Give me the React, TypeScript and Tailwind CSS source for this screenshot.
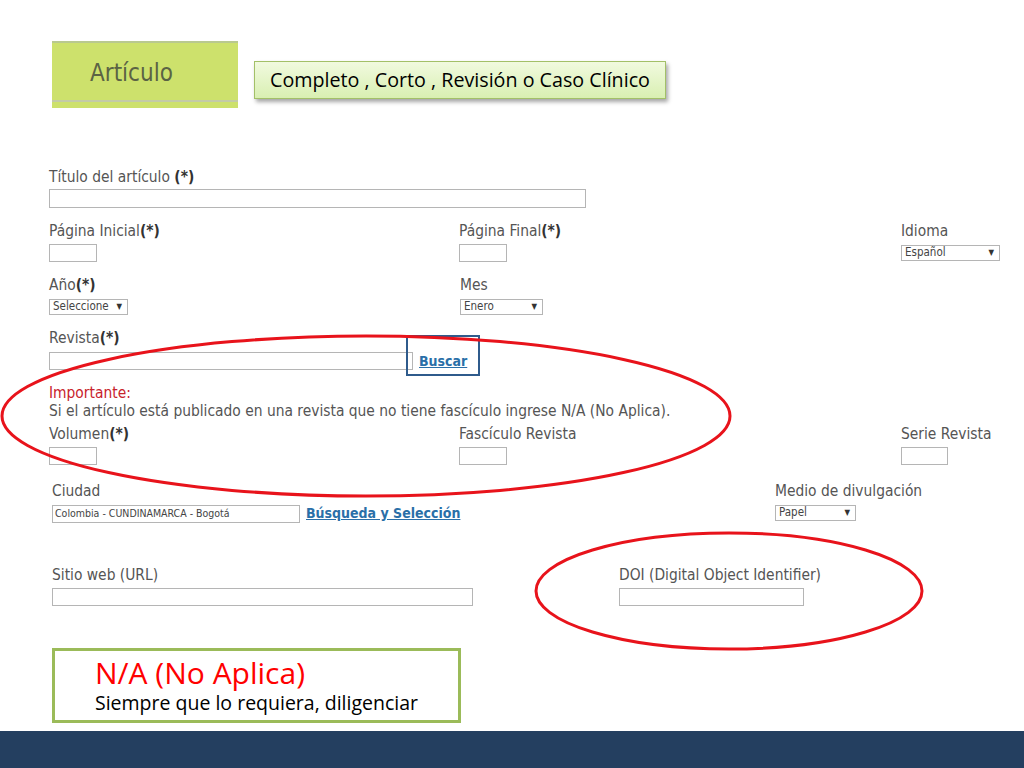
import React from "react";

const formFont = { fontFamily: '"DejaVu Sans Condensed", "DejaVu Sans", sans-serif' };

function Label({ text, req }: { text: string; req?: boolean }) {
  return (
    <div className="h-[18px] text-[15.4px] leading-[18px] text-[#555] whitespace-nowrap">
      {text}
      {req && <span className="font-bold text-[#333]">(*)</span>}
    </div>
  );
}

function Box({ w, h = 18 }: { w: string; h?: number }) {
  return <div className={`${w} ${h === 19 ? "h-[19px]" : "h-[18px]"} border border-[#b5b5b5] bg-white`} />;
}

function Select({ w, value }: { w: string; value: string }) {
  return (
    <div className={`${w} h-[16px] border border-[#b5b5b5] bg-white flex items-center justify-between pl-[3px] pr-[5px] text-[11.5px] leading-none text-[#444]`}>
      <span>{value}</span>
      <span className="text-[8px] text-[#333]">▼</span>
    </div>
  );
}

export default function App() {
  return (
    <div className="relative w-[1024px] h-[768px] bg-white overflow-hidden flex flex-col">
      {/* header */}
      <div className="flex items-start pt-[41px] pl-[52px]">
        <div className="w-[186px] h-[67px] bg-[#cde16c] border-t-2 border-[#b9c98f] flex flex-col">
          <div className="h-[57px] flex items-center pl-[38px] pt-[3px] text-[24px] text-[#5b6344]" style={formFont}>
            Artículo
          </div>
          <div className="h-[2px] bg-[#c3cba6]" />
        </div>
        <div
          className="ml-[16px] mt-[20px] w-[412px] h-[38px] border border-[#a3c068] bg-gradient-to-b from-[#f1fadf] to-[#d9efb2] shadow-[2px_3px_4px_rgba(0,0,0,0.35)] flex items-center justify-center text-[19.7px] text-black"
          style={{ fontFamily: '"Open Sans", sans-serif' }}
        >
          Completo , Corto , Revisión o Caso Clínico
        </div>
      </div>

      {/* form */}
      <div className="pl-[49px] mt-[60px]" style={formFont}>
        <Label text="Título del artículo " req />
        <div className="mt-[3px]">
          <Box w="w-[537px]" h={19} />
        </div>

        <div className="grid grid-cols-[410px_442px_1fr] mt-[14px]">
          <div>
            <Label text="Página Inicial" req />
            <div className="mt-[4px]"><Box w="w-[48px]" /></div>
          </div>
          <div>
            <Label text="Página Final" req />
            <div className="mt-[4px]"><Box w="w-[48px]" /></div>
          </div>
          <div>
            <Label text="Idioma" />
            <div className="mt-[5px]"><Select w="w-[99px]" value="Español" /></div>
          </div>
        </div>

        <div className="grid grid-cols-[410px_442px_1fr] mt-[14px]">
          <div>
            <Label text="Año" req />
            <div className="mt-[5px]"><Select w="w-[79px]" value="Seleccione" /></div>
          </div>
          <div className="pl-[1px]">
            <Label text="Mes" />
            <div className="mt-[5px]"><Select w="w-[83px]" value="Enero" /></div>
          </div>
        </div>

        <div className="mt-[14px]">
          <Label text="Revista" req />
          <div className="mt-[5px] h-[18px] flex items-start relative">
            <Box w="w-[364px]" />
            <div className="absolute left-[357px] top-[-17px] w-[74px] h-[41px] border-2 border-[#2f5b8c]" />
            <a className="ml-[6px] mt-[-1px] text-[14px] leading-[20px] font-bold text-[#2a6fa8] underline">Buscar</a>
          </div>
        </div>

        <div className="mt-[14px] text-[15.4px] leading-[18px]">
          <div className="text-[#c8232c]">Importante:</div>
          <div className="text-[#555] whitespace-nowrap">Si el artículo está publicado en una revista que no tiene fascículo ingrese N/A (No Aplica).</div>
        </div>

        <div className="grid grid-cols-[410px_442px_1fr] mt-[5px]">
          <div>
            <Label text="Volumen" req />
            <div className="mt-[4px]"><Box w="w-[48px]" /></div>
          </div>
          <div>
            <Label text="Fascículo Revista" />
            <div className="mt-[4px]"><Box w="w-[48px]" /></div>
          </div>
          <div>
            <Label text="Serie Revista" />
            <div className="mt-[4px]"><Box w="w-[47px]" /></div>
          </div>
        </div>

        <div className="grid grid-cols-[723px_1fr] mt-[17px] pl-[3px]">
          <div>
            <Label text="Ciudad" />
            <div className="mt-[5px] h-[18px] flex items-start">
              <div className="w-[248px] h-[18px] border border-[#b5b5b5] bg-white flex items-center pl-[2px] text-[10.5px] text-[#444]">
                Colombia - CUNDINAMARCA - Bogotá
              </div>
              <a className="ml-[6px] mt-[-2px] text-[14px] leading-[20px] font-bold text-[#2a6fa8] underline">Búsqueda y Selección</a>
            </div>
          </div>
          <div>
            <Label text="Medio de divulgación" />
            <div className="mt-[5px]"><Select w="w-[81px]" value="Papel" /></div>
          </div>
        </div>

        <div className="grid grid-cols-[567px_1fr] mt-[43px] pl-[3px]">
          <div>
            <Label text="Sitio web (URL)" />
            <div className="mt-[4px]"><Box w="w-[421px]" /></div>
          </div>
          <div>
            <Label text="DOI (Digital Object Identifier)" />
            <div className="mt-[4px]"><Box w="w-[185px]" /></div>
          </div>
        </div>
      </div>

      {/* N/A note */}
      <div
        className="ml-[52px] mt-[42px] w-[409px] h-[75px] border-[3px] border-[#9bbb59] pl-[40px] flex flex-col justify-center"
        style={{ fontFamily: '"Open Sans", sans-serif' }}
      >
        <div className="text-[30px] leading-[34px] text-[#ff0000]">N/A (No Aplica)</div>
        <div className="text-[19.5px] leading-[25px] text-black">Siempre que lo requiera, diligenciar</div>
      </div>

      <div className="mt-auto h-[37px] bg-[#243f60]" />

      {/* annotation ellipses */}
      <svg className="absolute left-0 top-0 pointer-events-none" width="1024" height="768">
        <ellipse cx="366" cy="416" rx="364" ry="80" fill="none" stroke="#e8131b" strokeWidth="3" />
        <ellipse cx="729" cy="591" rx="193" ry="58" fill="none" stroke="#e8131b" strokeWidth="3" />
      </svg>
    </div>
  );
}
